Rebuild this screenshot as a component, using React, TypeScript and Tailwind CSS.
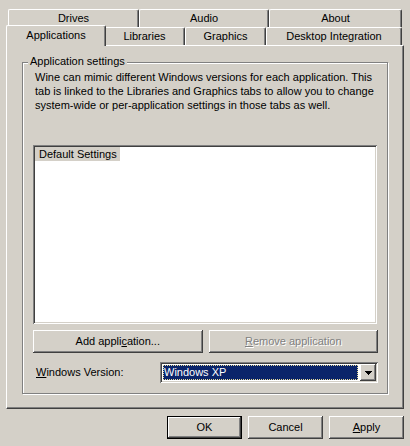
import React from "react";

const raised =
  "shadow-[inset_-1px_-1px_#404040,inset_1px_1px_#ffffff,inset_-2px_-2px_#808080]";
const sunken =
  "shadow-[inset_1px_1px_#808080,inset_-1px_-1px_#ffffff,inset_2px_2px_#404040,inset_-2px_-2px_#d4d0c8]";
const tab =
  "h-[18px] flex items-center justify-center border-t border-l border-r border-t-white border-l-white border-r-[#404040] shadow-[inset_-1px_0_#808080] rounded-tl-[2px] rounded-tr-[2px]";

export default function App() {
  return (
    <div className="w-[410px] h-[446px] bg-[#d4d0c8] font-['Liberation_Sans',Arial,sans-serif] text-[11px] leading-[13px] text-black pt-[9px] px-[6px] flex flex-col select-none">
      {/* back row of tabs */}
      <div className="flex px-[2px] h-[18px]">
        <div className={`${tab} w-[131px]`}>Drives</div>
        <div className={`${tab} w-[130px]`}>Audio</div>
        <div className={`${tab} w-[133px]`}>About</div>
      </div>
      {/* front row of tabs */}
      <div className="flex items-start px-[2px] h-[18px]">
        <div className="relative z-10 -mx-[2px] -mt-[2px] w-[100px] h-[21px] shrink-0 flex items-center justify-center pb-[1px] bg-[#d4d0c8] border-t border-l border-r border-t-white border-l-white border-r-[#404040] shadow-[inset_-1px_0_#808080] rounded-tl-[2px] rounded-tr-[2px]">
          Applications
        </div>
        <div className={`${tab} w-[81px]`}>Libraries</div>
        <div className={`${tab} w-[81px]`}>Graphics</div>
        <div className={`${tab} w-[136px]`}>Desktop Integration</div>
      </div>

      {/* tab panel */}
      <div className="h-[364px] border border-t-white border-l-white border-r-[#404040] border-b-[#404040] shadow-[inset_-1px_-1px_#808080] pt-[16px] pl-[15px]">
        <div className="relative w-[366px] h-[332px] border border-[#808080] shadow-[1px_1px_0_#ffffff,inset_1px_1px_0_#ffffff] pt-[7px] pl-[10px] pr-[9px] flex flex-col">
          <span className="absolute left-[5px] -top-[8px] px-[2px] bg-[#d4d0c8] leading-[13px]">
            Application settings
          </span>
          <div className="pl-[2px] whitespace-nowrap leading-[14px]">
            Wine can mimic different Windows versions for each application. This
            <br />
            tab is linked to the Libraries and Graphics tabs to allow you to change
            <br />
            system-wide or per-application settings in those tabs as well.
          </div>

          <div className={`mt-[33px] w-[344px] h-[179px] bg-white p-[2px] ${sunken}`}>
            <div className="inline-block bg-[#d4d0c8] pl-[4px] pr-[3px] h-[14px] pt-[1px] leading-[13px]">
              Default Settings
            </div>
          </div>

          <div className="mt-[6px] w-[345px] grid grid-cols-2 gap-[6px]">
            <div className={`h-[23px] bg-[#d4d0c8] flex items-center justify-center ${raised}`}>
              <span>
                Add appli<span className="underline">c</span>ation...
              </span>
            </div>
            <div className={`h-[23px] bg-[#d4d0c8] flex items-center justify-center text-[#808080] [text-shadow:1px_1px_0_#ffffff] ${raised}`}>
              <span>
                <span className="underline">R</span>emove application
              </span>
            </div>
          </div>

          <div className="mt-[9px] w-[345px] h-[21px] flex items-center">
            <span className="pl-[3px]">
              <span className="underline">W</span>indows Version:
            </span>
            <div className={`ml-auto w-[218px] h-[21px] bg-white p-[2px] flex ${sunken}`}>
              <div className="flex-1 m-[1px] mr-[2px] bg-[#0a246a] text-white pl-[1px] flex items-center outline-1 outline-dotted outline-[#e8dc9a] -outline-offset-1">
                Windows XP
              </div>
              <div className={`w-[16px] h-[17px] bg-[#d4d0c8] flex items-center justify-center ${raised}`}>
                <svg width="7" height="4" viewBox="0 0 7 4" shapeRendering="crispEdges">
                  <polygon points="0,0 7,0 3.5,4" fill="#000000" />
                </svg>
              </div>
            </div>
          </div>
        </div>
      </div>

      {/* dialog buttons */}
      <div className="mt-[7px] flex justify-end gap-[6px]">
        <div className={`w-[75px] h-[23px] bg-[#d4d0c8] border border-black flex items-center justify-center ${raised}`}>
          OK
        </div>
        <div className={`w-[75px] h-[23px] bg-[#d4d0c8] flex items-center justify-center ${raised}`}>
          Cancel
        </div>
        <div className={`w-[75px] h-[23px] bg-[#d4d0c8] flex items-center justify-center ${raised}`}>
          <span>
            <span className="underline">A</span>pply
          </span>
        </div>
      </div>
    </div>
  );
}
